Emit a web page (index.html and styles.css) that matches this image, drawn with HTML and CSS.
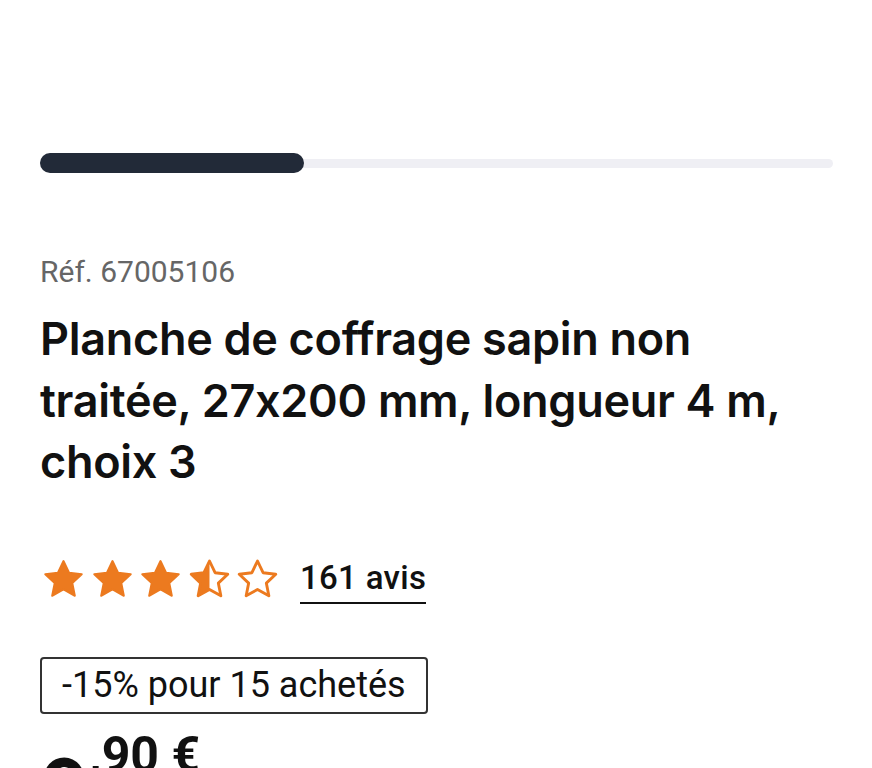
FILE: index.html
```html
<!DOCTYPE html>
<html lang="fr">

    <head>
        <meta charset="UTF-8">
        <meta name="viewport" content="width=device-width, initial-scale=1.0">
        <title>Planche de coffrage</title>
        <link rel="stylesheet" href="styles.css">
    </head>

    <body>
        <div class="progress">
            <div class="progress-track"></div>
            <div class="progress-fill"></div>
        </div>

        <p class="ref">Réf. 67005106</p>
        <h1 class="title">Planche de coffrage sapin non traitée, 27x200 mm, longueur 4 m, choix 3</h1>

        <div class="rating">
            <div class="stars">
                <svg class="star" viewBox="2.5 2.5 19 18.2"><path class="full" d="M12 2.5l2.9 6.1 6.6.8-4.9 4.6 1.3 6.6L12 17.3l-5.9 3.3 1.3-6.6-4.9-4.6 6.6-.8z"/></svg>
                <svg class="star" viewBox="2.5 2.5 19 18.2"><path class="full" d="M12 2.5l2.9 6.1 6.6.8-4.9 4.6 1.3 6.6L12 17.3l-5.9 3.3 1.3-6.6-4.9-4.6 6.6-.8z"/></svg>
                <svg class="star" viewBox="2.5 2.5 19 18.2"><path class="full" d="M12 2.5l2.9 6.1 6.6.8-4.9 4.6 1.3 6.6L12 17.3l-5.9 3.3 1.3-6.6-4.9-4.6 6.6-.8z"/></svg>
                <svg class="star" viewBox="2.5 2.5 19 18.2"><path class="half" d="M12 2.5v14.8l-5.9 3.3 1.3-6.6-4.9-4.6 6.6-.8z"/><path class="empty" d="M12 2.5l2.9 6.1 6.6.8-4.9 4.6 1.3 6.6L12 17.3l-5.9 3.3 1.3-6.6-4.9-4.6 6.6-.8z"/></svg>
                <svg class="star" viewBox="2.5 2.5 19 18.2"><path class="empty" d="M12 2.5l2.9 6.1 6.6.8-4.9 4.6 1.3 6.6L12 17.3l-5.9 3.3 1.3-6.6-4.9-4.6 6.6-.8z"/></svg>
            </div>
            <a class="reviews" href="#">161 avis</a>
        </div>

        <div class="promo">-15% pour 15 achetés</div>

        <div class="price">
            <span class="price-int">9</span><span class="price-dec">,90 €</span>
        </div>
    </body>

</html>
```

FILE: styles.css
```css
body {
    font-family: Roboto, "Liberation Sans", sans-serif;
    margin: 0;
    padding: 153px 39px 0 40px;
    color: #111;
    overflow: hidden;
}

.progress {
    position: relative;
    height: 20px;
    display: flex;
    align-items: center;
}

.progress-track {
    width: 100%;
    height: 9px;
    border-radius: 5px;
    background-color: #efeff4;
}

.progress-fill {
    position: absolute;
    left: 0;
    top: 0;
    width: 264px;
    height: 20px;
    border-radius: 10px;
    background-color: #222a38;
}

.ref {
    margin: 81px 0 0;
    font-size: 30px;
    line-height: 36px;
    color: #666;
}

.title {
    margin: 18px 0 0;
    font-family: Inter, Roboto, sans-serif;
    font-weight: 600;
    font-size: 45px;
    line-height: 61.5px;
    letter-spacing: -0.3px;
    color: #111;
}

.rating {
    display: flex;
    align-items: flex-start;
    gap: 24px;
    margin-top: 66px;
}

.stars {
    display: flex;
    gap: 11.5px;
    margin: 2px 0 0 5px;
}

.star {
    width: 37px;
    height: 35px;
    overflow: visible;
}

.star .full,
.star .half {
    fill: #ec7a1f;
}

.star .full {
    stroke: #ec7a1f;
    stroke-width: 1;
    stroke-linejoin: round;
}

.star .empty {
    fill: none;
    stroke: #ec7a1f;
    stroke-width: 1.5;
    stroke-linejoin: round;
}

.reviews {
    font-size: 33px;
    line-height: 38px;
    font-weight: 500;
    letter-spacing: 0.3px;
    color: #111;
    text-decoration: none;
    border-bottom: 2px solid #111;
    padding-bottom: 5px;
}

.promo {
    display: inline-block;
    margin-top: 53px;
    padding: 6px 20px;
    font-size: 36px;
    line-height: 41px;
    border: 2px solid #333;
    border-radius: 4px;
}

.price {
    display: flex;
    align-items: flex-start;
    margin-top: 15px;
    font-weight: 700;
}

.price-int {
    font-size: 86px;
    line-height: 86px;
    margin-top: 18px;
}

.price-dec {
    font-size: 50px;
    line-height: 52px;
}
```
